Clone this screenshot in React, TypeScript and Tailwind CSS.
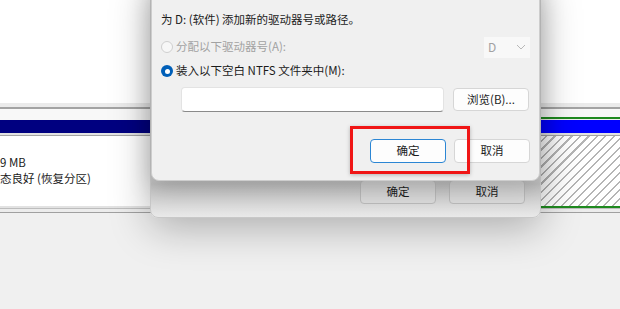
// Disk management: "change drive letter" dialog with the "add path" dialog on top

const FONT = { fontFamily: '"Noto Sans CJK SC", "Noto Sans", sans-serif' };

function DiskColumn({ right }: { right?: boolean }) {
  return (
    <div className="flex flex-col flex-1">
      <div className="h-[103px] bg-white" />
      <div className="h-[4px] bg-[#ebebeb]" />
      <div className="h-[2px] bg-[#a3a3a3]" />
      {right ? (
        <>
          <div className="h-[8px] bg-[#f8f8f8]" />
          <div className="h-[2px] bg-[#1f8a1f]" />
          <div className="h-[1px] bg-[#f0f0f0]" />
          <div className="h-[13px] bg-[#0000ff]" />
        </>
      ) : (
        <>
          <div className="h-[11px] bg-[#f8f8f8]" />
          <div className="h-[13px] bg-[#000080]" />
        </>
      )}
      <div className="h-[2px] bg-[#e2e2e2]" />
      <div className="h-[1px] bg-[#a3a3a3]" />
      {right ? (
        <div className="h-[70px] bg-[repeating-linear-gradient(135deg,#ffffff_0px,#ffffff_4.5px,#b5b5b5_4.5px,#b5b5b5_6px)]" />
      ) : (
        <div className="h-[70px] bg-white pt-[18px] text-[11.5px] leading-[16px] text-[#1a1a1a]">
          <div>9 MB</div>
          <div>态良好 (恢复分区)</div>
        </div>
      )}
      {right ? (
        <div className="h-[2px] bg-[#1f8a1f]" />
      ) : (
        <div className="h-[2px] bg-[#e2e2e2]" />
      )}
      <div className="h-[1px] bg-[#bdbdbd]" />
      <div className="h-[3px] bg-[#ececec]" />
      <div className="h-[1px] bg-[#a0a0a0]" />
      <div className="flex-1 bg-[#f0f0f0]" />
    </div>
  );
}

function Btn({ label, primary, faded }: { label: string; primary?: boolean; faded?: boolean }) {
  return (
    <div
      className={`flex items-center justify-center w-[76px] h-[24px] rounded-[4px] border text-[11.5px] text-[#1b1b1b] ${
        faded
          ? 'border-[#b9b9b9] bg-[#dcdcdc]/60'
          : primary
          ? 'border-[#2b86d4] bg-[#fdfdfd]'
          : 'border-[#d6d6d6] bg-[#fdfdfd]'
      }`}
    >
      {label}
    </div>
  );
}

export default function App() {
  return (
    <div className="relative w-[620px] h-[309px] overflow-hidden bg-[#f0f0f0]" style={FONT}>
      <div className="flex h-full">
        <DiskColumn />
        <DiskColumn right />
      </div>

      {/* back dialog */}
      <div className="absolute left-[150px] top-[-20px] w-[391px] h-[238px] rounded-b-[8px] border border-[#c8c8c8] bg-[linear-gradient(180deg,#cfcfcf_0%,#cfcfcf_80%,#c0c0c0_86%,#e9e9e9_100%)] shadow-[0_10px_40px_rgba(0,0,0,0.28)]">
        <div className="absolute left-[209px] top-[199px] flex gap-[13px]">
          <Btn label="确定" faded />
          <Btn label="取消" faded />
        </div>
      </div>

      {/* front dialog */}
      <div className="absolute left-[151px] top-[-20px] w-[389px] h-[201px] rounded-b-[8px] border border-[#cdcdcd] bg-[#f0f0f0] shadow-[0_6px_24px_rgba(0,0,0,0.22)] text-[11.5px] text-[#1b1b1b]">
        <div className="flex flex-col pl-[9px] pt-[30px]">
          <div className="h-[16px] leading-[16px]">为 D: (软件) 添加新的驱动器号或路径。</div>

          <div className="flex items-center mt-[9px] h-[22px]">
            <span className="w-[12px] h-[12px] rounded-full border border-[#cfcfcf] bg-[#f7f7f7]" />
            <span className="ml-[3px] text-[#a2a2a2]">分配以下驱动器号(A):</span>
            <div className="ml-auto mr-[9px] flex items-center justify-between w-[46px] h-[21px] bg-[#f8f8f8] px-[4px] text-[12px] text-[#a2a2a2]">
              <span>D</span>
              <svg width="10" height="6" viewBox="0 0 10 6" fill="none">
                <path d="M1 1l4 4 4-4" stroke="#b8b8b8" strokeWidth="1" />
              </svg>
            </div>
          </div>

          <div className="flex items-center mt-[5px] h-[16px]">
            <span className="flex items-center justify-center w-[12px] h-[12px] rounded-full bg-[#005fb8]">
              <span className="w-[5px] h-[5px] rounded-full bg-white" />
            </span>
            <span className="ml-[3px]">装入以下空白 NTFS 文件夹中(M):</span>
          </div>

          <div className="flex items-center mt-[8px] pl-[20px] gap-[9px]">
            <div className="w-[263px] h-[25px] rounded-[4px] border border-[#e3e3e3] border-b-[#8a8a8a] bg-white" />
            <div className="flex items-center justify-center w-[76px] h-[23px] rounded-[4px] border border-[#d6d6d6] bg-[#fdfdfd]">
              浏览(B)...
            </div>
          </div>

          <div className="flex justify-end gap-[8px] mt-[27px] pr-[9px]">
            <Btn label="确定" primary />
            <Btn label="取消" />
          </div>
        </div>
      </div>

      {/* red highlight box */}
      <div className="absolute left-[350px] top-[126px] w-[120px] h-[48px] border-[3px] border-[#f01616] shadow-[0_1px_4px_rgba(0,0,0,0.25)]" />
    </div>
  );
}
